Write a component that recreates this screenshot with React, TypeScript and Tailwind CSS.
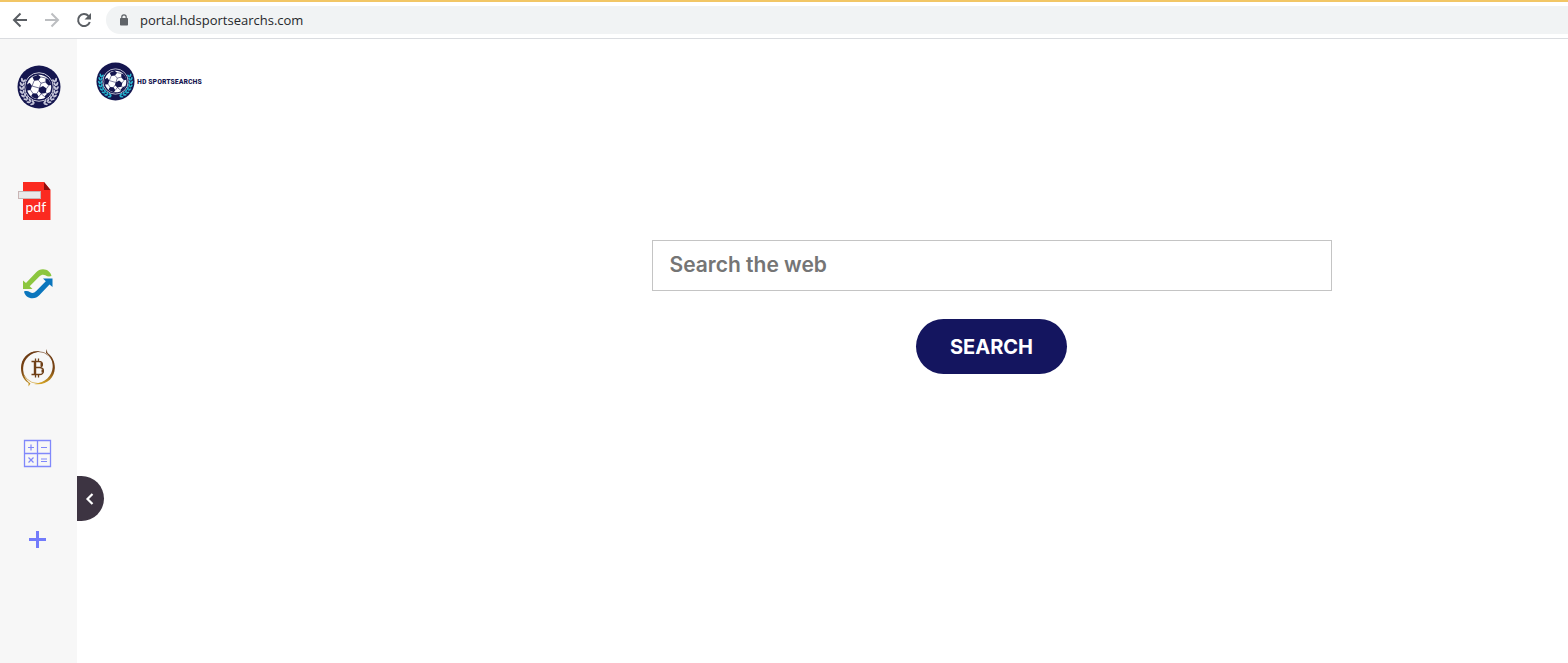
import type { ReactNode } from 'react';

type Shortcut = {
  name: string;
  icon: ReactNode;
};

const LEAF_ANGLES = [20, 33, 46, 59, 72, 85, 98, 111];

const BallBadge = function ({ leaf, className }: { leaf: string; className: string }) {
  return (
    <svg viewBox="0 0 44 44" className={className} aria-hidden="true">
      <circle cx="22" cy="22" r="21.5" fill="#15164f" />
      {LEAF_ANGLES.map((angle) => (
        <g key={angle} fill={leaf}>
          <g transform={`rotate(${angle} 22 22)`}>
            <ellipse cx="21.5" cy="38" rx="2.1" ry="1" transform="rotate(28 21.5 38)" />
            <ellipse cx="21.5" cy="40.4" rx="2.1" ry="1" transform="rotate(-28 21.5 40.4)" />
          </g>
          <g transform={`rotate(${-angle} 22 22)`}>
            <ellipse cx="22.5" cy="38" rx="2.1" ry="1" transform="rotate(-28 22.5 38)" />
            <ellipse cx="22.5" cy="40.4" rx="2.1" ry="1" transform="rotate(28 22.5 40.4)" />
          </g>
        </g>
      ))}
      <circle cx="22" cy="22" r="14.3" fill="#15164f" stroke="#dcdce8" strokeWidth="0.9" />
      <circle cx="22" cy="22" r="12.2" fill="#fff" />
      <g fill="#15164f">
        <path d="M22 23l4-2 3.6 2.600-.8 4.300-4.700.8-2.700-2.600z" />
        <path d="M15.500 12l5.500-2.200 3 2.200-2.600 3.200-4.300.6z" />
        <path d="M28.500 13l2.600.9c1.600 1.700 2.700 4 3 6.200l-2.600.4-3-3z" />
        <path d="M10 19.500l2.700-1.800 2.300 3.300-1.400 4-3.500.5c-.5-2-.5-4-.1-6z" />
        <path d="M15.800 28.200l4 .4 2 3.200-1.600 2.300c-2.500-.4-4.500-1.500-6-3z" />
        <path d="M30.500 28.200l2.600-1.100c-1 2.700-2.600 4.700-4.700 5.900l-1-1.500z" />
      </g>
      <path
        d="M21.400 15.200L24 18.200M24 18.200l4.500-1.200M24 18.200L22.500 23M17.100 15.800L15 21M24 12l4.500 1M15 21l7 2M13.600 25l2.200 3.200M21.400 26.100l-1.600 2.500M29.600 23.600l2-3M28.800 27.900l1.700.5M24.100 28.700l3.300 2.800M21.800 31.800l2.300-3.100"
        stroke="#15164f"
        strokeWidth="0.6"
        fill="none"
      />
    </svg>
  );
};

const PdfIcon = () => (
  <svg viewBox="0 0 48 48" className="size-12" aria-hidden="true">
    <path d="M9 6h21l6.500 8v30H9z" fill="#fb2a20" />
    <path d="M30 6l6.500 8H30z" fill="#8f0d0d" />
    <rect x="4.500" y="15.500" width="22" height="7" fill="#e9e9e9" stroke="#c9b5b5" />
    <text x="11.500" y="36" fontSize="14" fill="#fff" fontFamily="Lato, sans-serif">
      pdf
    </text>
  </svg>
);

const SyncIcon = () => (
  <svg viewBox="0 0 48 48" className="size-12" aria-hidden="true">
    <path d="M9 19.500v8.500h9.500l-2.800-2.800 9.600-9.700c2-2 4-2.400 6-1.200 2.200 1.300 4 1.500 6.200.7-.8-4-4.200-6.800-8.500-6.800-2.800 0-5 1.300-6.800 3L12 22z" fill="#8cc63f" />
    <path d="M38.500 26V17.500H29l2.800 2.800-9.600 9.700c-2 2-4 2.400-6 1.200-2.200-1.300-4-1.500-6.200-.7.800 4 4.200 6.800 8.500 6.800 2.800 0 5-1.300 6.800-3l10.200-10.800z" fill="#0b76bd" />
  </svg>
);

const BitcoinIcon = () => (
  <svg viewBox="0 0 48 48" className="size-12" aria-hidden="true">
    <defs>
      <linearGradient id="coin" x1="0" y1="0" x2="0" y2="1">
        <stop offset="0" stopColor="#6b3a14" />
        <stop offset="0.6" stopColor="#7a4513" />
        <stop offset="1" stopColor="#d6a526" />
      </linearGradient>
    </defs>
    <g fill="url(#coin)">
      <path d="M26 5.500C15 3.800 7 12 7 22c0 7.500 3.500 12.500 7.500 15v3.500l2-3C11 33.500 8.700 28 9.200 21.500 9.800 13 16.500 6.600 26 5.500z" />
      <path d="M32.500 3l-.5 4c4.500 3 7 8 6.700 14-.5 9-7.500 16-18.700 17 12 2 20.500-5.500 20.800-16C41 15.500 38 10 33.500 7z" />
    </g>
    <circle cx="24" cy="21.500" r="16" fill="none" stroke="url(#coin)" strokeWidth="0.6" />
    <g transform="translate(-1 0)" fill="none" stroke="#6f4018">
      <path d="M22 15.500v13" strokeWidth="2.400" />
      <path d="M18.500 15.500H26c4.500 0 4.500 6 0 6h-4h4.500c5.200 0 5.200 7 0 7h-8M22.500 12.500v3M25.500 12.500v3M22.500 28.500v3M25.500 28.500v3" strokeWidth="1.300" />
      <path d="M28.500 17v3M29.500 23.500v3" strokeWidth="2" />
    </g>
  </svg>
);

const CalculatorIcon = () => (
  <svg viewBox="0 0 48 48" className="size-12" fill="none" stroke="#8088fb" aria-hidden="true">
    <path d="M10.500 9.500h26v26h-26zM23.500 9.500v26M10.500 22.500h26" strokeWidth="1.300" />
    <path d="M14 16.500h6M17 13.500v6M27 16.500h6M14.500 26.500l5 5M19.500 26.500l-5 5M27 28h6M27 30.500h6" strokeWidth="1.200" />
  </svg>
);

const PlusIcon = () => (
  <svg viewBox="0 0 48 48" className="size-12" aria-hidden="true">
    <path d="M15 23.500h17M23.500 15v17" stroke="#727bfb" strokeWidth="3" />
  </svg>
);

const SHORTCUTS: Shortcut[] = [
  { name: 'PDF', icon: <PdfIcon /> },
  { name: 'Converter', icon: <SyncIcon /> },
  { name: 'Bitcoin', icon: <BitcoinIcon /> },
  { name: 'Calculator', icon: <CalculatorIcon /> },
  { name: 'Add', icon: <PlusIcon /> },
];

const BrowserBar = function () {
  return (
    <header className="flex h-[39px] items-center border-t-2 border-b border-t-[#f2c665] border-b-[#dadce0] bg-white pl-3">
      <div className="flex gap-4 pr-3.5 text-[#5a5e63]">
        <button type="button" aria-label="Back">
          <svg viewBox="0 0 16 16" className="size-4" fill="none" stroke="currentColor" strokeWidth="2" aria-hidden="true">
            <path d="M15 8H2.500M8.500 1.500L2 8l6.500 6.500" />
          </svg>
        </button>
        <button type="button" aria-label="Forward" className="text-[#bcbec1]">
          <svg viewBox="0 0 16 16" className="size-4" fill="none" stroke="currentColor" strokeWidth="2" aria-hidden="true">
            <path d="M1 8h12.500M7.500 1.500L14 8l-6.500 6.500" />
          </svg>
        </button>
        <button type="button" aria-label="Reload">
          <svg viewBox="0 0 16 16" className="size-4" fill="none" stroke="currentColor" strokeWidth="2" aria-hidden="true">
            <path d="M13.800 10A6 6 0 1 1 12.500 4" />
            <path d="M15 1v6.500H8.500z" fill="currentColor" stroke="none" />
          </svg>
        </button>
      </div>
      <div className="flex h-7 flex-1 items-center gap-2.5 rounded-l-full bg-[#f1f3f4] pl-3">
        <svg viewBox="0 0 12 12" className="size-3 shrink-0" aria-hidden="true">
          <rect x="2" y="4" width="8" height="7.500" rx="0.800" fill="#5f6368" />
          <path d="M3.800 4.500V3a2.200 2.200 0 0 1 4.400 0v1.500" fill="none" stroke="#5f6368" strokeWidth="1.200" />
        </svg>
        <input
          type="text"
          aria-label="Address"
          defaultValue="portal.hdsportsearchs.com"
          className="min-w-0 flex-1 bg-transparent pt-px font-['Open_Sans',sans-serif] text-[13px] text-[#26282b] outline-none"
        />
      </div>
    </header>
  );
};

const Sidebar = function () {
  return (
    <aside className="relative w-[77px] shrink-0 bg-[#f7f7f7] pt-[26px]">
      <nav className="flex flex-col items-center">
        <a href="#home" aria-label="Home" className="mb-[67px]">
          <BallBadge leaf="#c9c9dc" className="size-11" />
        </a>
        <ul className="flex flex-col gap-[37px] pr-0.5">
          {SHORTCUTS.map((shortcut) => (
            <li key={shortcut.name}>
              <a href={`#${shortcut.name.toLowerCase()}`} aria-label={shortcut.name} className="block">
                {shortcut.icon}
              </a>
            </li>
          ))}
        </ul>
      </nav>
      <button
        type="button"
        aria-label="Collapse sidebar"
        className="absolute top-[437px] left-full flex h-[45px] w-[27px] items-center justify-center rounded-r-full bg-[#3d3442] pr-0.5"
      >
        <svg viewBox="0 0 12 12" className="size-3" fill="none" stroke="#fff" strokeWidth="2.200" aria-hidden="true">
          <path d="M8.500 1L3.500 6l5 5" />
        </svg>
      </button>
    </aside>
  );
};

const App = function () {
  return (
    <div className="flex min-h-screen flex-col bg-white">
      <BrowserBar />
      <div className="flex flex-1">
        <Sidebar />
        <main className="flex-1">
          <a href="#home" className="flex w-fit items-center gap-0.5 pt-[23px] pl-[19px]">
            <BallBadge leaf="#27b5cf" className="size-[39px]" />
            <span className="font-['Liberation_Sans_Narrow','Roboto_Condensed',Roboto,sans-serif] text-[8px] font-bold text-[#15164f]">
              HD SPORTSEARCHS
            </span>
          </a>
          <form
            className="mt-[139px] flex flex-col items-center gap-7 pl-[338px] font-[Inter,sans-serif]"
            onSubmit={(e) => e.preventDefault()}
          >
            <input
              type="text"
              aria-label="Search the web"
              placeholder="Search the web"
              className="h-[51px] w-full max-w-[680px] border border-[#c4c4c4] px-[17px] pb-0.5 text-[21px] font-semibold text-[#333] placeholder:text-[#757575]"
            />
            <button type="submit" className="h-[55px] w-[151px] rounded-full bg-[#14155f] text-xl font-bold text-white">
              SEARCH
            </button>
          </form>
        </main>
      </div>
    </div>
  );
};

export default App;
